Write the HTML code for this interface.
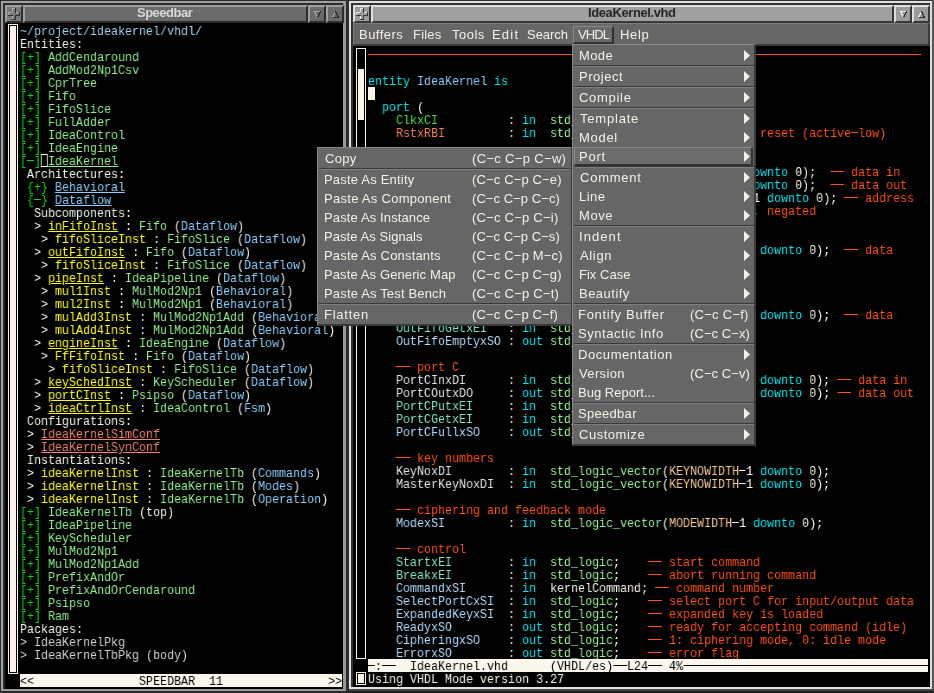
<!DOCTYPE html>
<html><head><meta charset="utf-8"><style>
*{margin:0;padding:0;box-sizing:border-box}
html,body{width:934px;height:693px;overflow:hidden;background:#3c3c3c;position:relative}
.a{position:absolute}
.ln{position:absolute;will-change:transform;transform:scaleX(0.8641975308641976);transform-origin:0 0;padding-top:1px;white-space:pre;font-family:"Liberation Mono",monospace;font-size:13.5px;letter-spacing:0px;line-height:13px;height:13px;color:#f8f4e8}
.ln b{font-weight:normal}
.ln{-webkit-text-stroke:0px currentColor}
.ln i.d{display:inline-block;height:1px;background:currentColor;vertical-align:top;margin-top:5px}
.u{text-decoration:underline;text-underline-offset:1px}
.w{color:#f8f4e8}
.dir{color:#a0d0f0}
.gb{color:#00dd00}
.ent{color:#90ee90}
.arch{color:#87cefa}
.inst{color:#ffff00}
.cfg{color:#f08070}
.pkg{color:#d3d3d3}
.cm{color:#ff5214}
.kw{color:#00e8f0}
.nm{color:#87cefa}
.ty{color:#98f098}
.clk{color:#40e040}
.rst{color:#f08050}
.dat{color:#e4e4e4}
.en{color:#7fe8c0}
.st{color:#b0dcff}
.cst{color:#f5c890}
.cbox{display:inline-block;width:8.100px;height:13px;border:1px solid #f8f4e8;vertical-align:top;margin-top:-1px}
.sans{position:absolute;will-change:transform;white-space:pre;font-family:"Liberation Sans",sans-serif;font-size:13px;line-height:15px;color:#f4f0e4;letter-spacing:0.3px}
</style></head>
<body>

<!-- left window -->
<div class="a" style="left:0;top:0;width:348px;height:693px;background:#2c2c2c"></div>
<div class="a" style="left:1px;top:1px;width:345px;height:2px;background:#a0a0a0"></div>
<div class="a" style="left:1px;top:1px;width:2px;height:690px;background:#a0a0a0"></div>
<div class="a" style="left:343px;top:3px;width:3px;height:688px;background:#999"></div>
<div class="a" style="left:3px;top:689px;width:343px;height:2px;background:#999"></div>
<!-- buttons -->
<div class="a" style="left:5px;top:5px;width:18px;height:18px;background:#7a7a7a;border-top:2px solid #a0a0a0;border-left:2px solid #a0a0a0;border-right:2px solid #2c2c2c;border-bottom:2px solid #2c2c2c"></div>
<svg class="a" style="left:8px;top:8px" width="12" height="12" shape-rendering="crispEdges"><rect x="4" y="0" width="4" height="12" fill="#7a7a7a"/><rect x="0" y="4" width="12" height="4" fill="#7a7a7a"/><rect x="4" y="0" width="4" height="1" fill="#a8a8a8"/><rect x="4" y="0" width="1" height="4" fill="#a8a8a8"/><rect x="0" y="4" width="4" height="1" fill="#a8a8a8"/><rect x="0" y="4" width="1" height="4" fill="#a8a8a8"/><rect x="8" y="4" width="4" height="1" fill="#a8a8a8"/><rect x="4" y="8" width="1" height="4" fill="#a8a8a8"/><rect x="7" y="0" width="1" height="5" fill="#2c2c2c"/><rect x="11" y="4" width="1" height="4" fill="#2c2c2c"/><rect x="8" y="7" width="4" height="1" fill="#2c2c2c"/><rect x="7" y="7" width="1" height="5" fill="#2c2c2c"/><rect x="4" y="11" width="4" height="1" fill="#2c2c2c"/><rect x="0" y="7" width="5" height="1" fill="#2c2c2c"/></svg>
<div class="a" style="left:23px;top:5px;width:285px;height:18px;background:#6b6b6b;border-top:2px solid #a0a0a0;border-left:2px solid #a0a0a0;border-right:2px solid #2c2c2c;border-bottom:2px solid #2c2c2c"></div>
<div class="a" style="left:308px;top:5px;width:18px;height:18px;background:#6b6b6b;border-top:2px solid #a0a0a0;border-left:2px solid #a0a0a0;border-right:2px solid #2c2c2c;border-bottom:2px solid #2c2c2c"></div>
<div class="a" style="left:326px;top:5px;width:18px;height:18px;background:#6b6b6b;border-top:2px solid #a0a0a0;border-left:2px solid #a0a0a0;border-right:2px solid #2c2c2c;border-bottom:2px solid #2c2c2c"></div>
<div class="sans" style="left:137px;top:5px;font-weight:bold;font-size:13px;color:#d8d8d8;letter-spacing:-0.5px">Speedbar</div>
<svg class="a" style="left:314px;top:11px" width="8" height="8" shape-rendering="crispEdges"><path d="M0.5 0.5H6.5" stroke="#a0a0a0"/><path d="M0.5 0.5L3.5 6.5" stroke="#a0a0a0"/><path d="M6.5 0.5L3.5 6.5" stroke="#2a2a2a"/></svg>
<svg class="a" style="left:332px;top:11px" width="8" height="8" shape-rendering="crispEdges"><path d="M0.5 6.5L3.5 0.5" stroke="#a0a0a0"/><path d="M3.5 0.5L6.5 6.5" stroke="#2a2a2a"/><path d="M0.5 6.5H6.5" stroke="#2a2a2a"/></svg>
<!-- content -->
<div class="a" style="left:5px;top:23px;width:338px;height:666px;background:#000"></div>

<!-- right window -->
<div class="a" style="left:348px;top:0;width:586px;height:693px;background:#333"></div>
<div class="a" style="left:349px;top:1px;width:583px;height:2px;background:#e0e0e0"></div>
<div class="a" style="left:349px;top:1px;width:2px;height:688px;background:#e0e0e0"></div>
<div class="a" style="left:930px;top:3px;width:2px;height:686px;background:#e0e0e0"></div>
<div class="a" style="left:932px;top:0;width:2px;height:693px;background:#555"></div>
<div class="a" style="left:349px;top:687px;width:583px;height:2px;background:#e0e0e0"></div>
<div class="a" style="left:349px;top:689px;width:585px;height:2px;background:#484848"></div>
<div class="a" style="left:348px;top:691px;width:586px;height:2px;background:#1e1e1e"></div>
<!-- buttons -->
<div class="a" style="left:353px;top:5px;width:18px;height:18px;background:#9c9c9c;border-top:2px solid #e0e0e0;border-left:2px solid #e0e0e0;border-right:2px solid #383838;border-bottom:2px solid #383838"></div>
<svg class="a" style="left:356px;top:8px" width="12" height="12" shape-rendering="crispEdges"><rect x="4" y="0" width="4" height="12" fill="#9c9c9c"/><rect x="0" y="4" width="12" height="4" fill="#9c9c9c"/><rect x="4" y="0" width="4" height="1" fill="#e8e8e8"/><rect x="4" y="0" width="1" height="4" fill="#e8e8e8"/><rect x="0" y="4" width="4" height="1" fill="#e8e8e8"/><rect x="0" y="4" width="1" height="4" fill="#e8e8e8"/><rect x="8" y="4" width="4" height="1" fill="#e8e8e8"/><rect x="4" y="8" width="1" height="4" fill="#e8e8e8"/><rect x="7" y="0" width="1" height="5" fill="#383838"/><rect x="11" y="4" width="1" height="4" fill="#383838"/><rect x="8" y="7" width="4" height="1" fill="#383838"/><rect x="7" y="7" width="1" height="5" fill="#383838"/><rect x="4" y="11" width="4" height="1" fill="#383838"/><rect x="0" y="7" width="5" height="1" fill="#383838"/></svg>
<div class="a" style="left:371px;top:5px;width:523px;height:18px;background:#a0a0a0;border-top:2px solid #e0e0e0;border-left:2px solid #e0e0e0;border-right:2px solid #383838;border-bottom:2px solid #383838"></div>
<div class="a" style="left:894px;top:5px;width:18px;height:18px;background:#9c9c9c;border-top:2px solid #e0e0e0;border-left:2px solid #e0e0e0;border-right:2px solid #383838;border-bottom:2px solid #383838"></div>
<div class="a" style="left:912px;top:5px;width:18px;height:18px;background:#9c9c9c;border-top:2px solid #e0e0e0;border-left:2px solid #e0e0e0;border-right:2px solid #383838;border-bottom:2px solid #383838"></div>
<div class="sans" style="left:588px;top:5px;font-weight:bold;font-size:13px;color:#262626;letter-spacing:-0.4px">IdeaKernel.vhd</div>
<svg class="a" style="left:900px;top:11px" width="8" height="8" shape-rendering="crispEdges"><path d="M0.5 0.5H6.5" stroke="#f0f0f0"/><path d="M0.5 0.5L3.5 6.5" stroke="#f0f0f0"/><path d="M6.5 0.5L3.5 6.5" stroke="#303030"/></svg>
<svg class="a" style="left:918px;top:11px" width="8" height="8" shape-rendering="crispEdges"><path d="M0.5 6.5L3.5 0.5" stroke="#f0f0f0"/><path d="M3.5 0.5L6.5 6.5" stroke="#303030"/><path d="M0.5 6.5H6.5" stroke="#303030"/></svg>
<!-- menubar -->
<div class="a" style="left:353px;top:23px;width:577px;height:23px;background:#666;border-top:1px solid #7a7a7a;border-left:1px solid #7a7a7a;border-bottom:2px solid #3a3a3a;border-right:2px solid #3a3a3a"></div>
<div class="a" style="left:353px;top:46px;width:577px;height:641px;background:#000"></div>

<div class="sans" style="left:359.4px;top:27px;letter-spacing:0.467px">Buffers</div>
<div class="sans" style="left:413.2px;top:27px;letter-spacing:0.2px">Files</div>
<div class="sans" style="left:451.9px;top:27px;letter-spacing:0.475px">Tools</div>
<div class="sans" style="left:492.4px;top:27px;letter-spacing:1.2px">Edit</div>
<div class="sans" style="left:526.6px;top:27px;letter-spacing:-0.04px">Search</div>
<div class="a" style="left:573px;top:26px;width:41px;height:18px;background:#6a6a6a;border-top:1px solid #888;border-left:1px solid #888;border-right:2px solid #333;border-bottom:2px solid #333"></div>
<div class="sans" style="left:578.3px;top:27px;letter-spacing:-0.933px">VHDL</div>
<div class="sans" style="left:619.5px;top:27px;letter-spacing:0.633px">Help</div>
<div class="ln" style="left:20px;top:24px"><b class="dir">~/project/ideakernel/vhdl/</b></div>
<div class="ln" style="left:20px;top:37px"><b class="w">Entities:</b></div>
<div class="ln" style="left:20px;top:50px"><b class="gb">[+]</b><b class="w"> </b><b class="ent">AddCendaround</b></div>
<div class="ln" style="left:20px;top:63px"><b class="gb">[+]</b><b class="w"> </b><b class="ent">AddMod2Np1Csv</b></div>
<div class="ln" style="left:20px;top:76px"><b class="gb">[+]</b><b class="w"> </b><b class="ent">CprTree</b></div>
<div class="ln" style="left:20px;top:89px"><b class="gb">[+]</b><b class="w"> </b><b class="ent">Fifo</b></div>
<div class="ln" style="left:20px;top:102px"><b class="gb">[+]</b><b class="w"> </b><b class="ent">FifoSlice</b></div>
<div class="ln" style="left:20px;top:115px"><b class="gb">[+]</b><b class="w"> </b><b class="ent">FullAdder</b></div>
<div class="ln" style="left:20px;top:128px"><b class="gb">[+]</b><b class="w"> </b><b class="ent">IdeaControl</b></div>
<div class="ln" style="left:20px;top:141px"><b class="gb">[+]</b><b class="w"> </b><b class="ent">IdeaEngine</b></div>
<div class="ln" style="left:20px;top:154px"><b class="gb">[<i class="d" style="width:8.100px"></i>]</b><i class="cbox"></i><b class="ent u">IdeaKernel</b></div>
<div class="ln" style="left:20px;top:167px"><b class="w"> Architectures:</b></div>
<div class="ln" style="left:20px;top:180px"><b class="w"> </b><b class="gb">{+}</b><b class="w"> </b><b class="arch u">Behavioral</b></div>
<div class="ln" style="left:20px;top:193px"><b class="w"> </b><b class="gb">{<i class="d" style="width:8.100px"></i>}</b><b class="w"> </b><b class="arch u">Dataflow</b></div>
<div class="ln" style="left:20px;top:206px"><b class="w">  Subcomponents:</b></div>
<div class="ln" style="left:20px;top:219px"><b class="w">  &gt; </b><b class="inst u">inFifoInst</b><b class="w"> : </b><b class="ent">Fifo</b><b class="w"> (</b><b class="arch">Dataflow</b><b class="w">)</b></div>
<div class="ln" style="left:20px;top:232px"><b class="w">   &gt; </b><b class="inst">fifoSliceInst</b><b class="w"> : </b><b class="ent">FifoSlice</b><b class="w"> (</b><b class="arch">Dataflow</b><b class="w">)</b></div>
<div class="ln" style="left:20px;top:245px"><b class="w">  &gt; </b><b class="inst u">outFifoInst</b><b class="w"> : </b><b class="ent">Fifo</b><b class="w"> (</b><b class="arch">Dataflow</b><b class="w">)</b></div>
<div class="ln" style="left:20px;top:258px"><b class="w">   &gt; </b><b class="inst">fifoSliceInst</b><b class="w"> : </b><b class="ent">FifoSlice</b><b class="w"> (</b><b class="arch">Dataflow</b><b class="w">)</b></div>
<div class="ln" style="left:20px;top:271px"><b class="w">  &gt; </b><b class="inst u">pipeInst</b><b class="w"> : </b><b class="ent">IdeaPipeline</b><b class="w"> (</b><b class="arch">Dataflow</b><b class="w">)</b></div>
<div class="ln" style="left:20px;top:284px"><b class="w">   &gt; </b><b class="inst">mul1Inst</b><b class="w"> : </b><b class="ent">MulMod2Np1</b><b class="w"> (</b><b class="arch">Behavioral</b><b class="w">)</b></div>
<div class="ln" style="left:20px;top:297px"><b class="w">   &gt; </b><b class="inst">mul2Inst</b><b class="w"> : </b><b class="ent">MulMod2Np1</b><b class="w"> (</b><b class="arch">Behavioral</b><b class="w">)</b></div>
<div class="ln" style="left:20px;top:310px"><b class="w">   &gt; </b><b class="inst">mulAdd3Inst</b><b class="w"> : </b><b class="ent">MulMod2Np1Add</b><b class="w"> (</b><b class="arch">Behavioral</b><b class="w">)</b></div>
<div class="ln" style="left:20px;top:323px"><b class="w">   &gt; </b><b class="inst">mulAdd4Inst</b><b class="w"> : </b><b class="ent">MulMod2Np1Add</b><b class="w"> (</b><b class="arch">Behavioral</b><b class="w">)</b></div>
<div class="ln" style="left:20px;top:336px"><b class="w">  &gt; </b><b class="inst u">engineInst</b><b class="w"> : </b><b class="ent">IdeaEngine</b><b class="w"> (</b><b class="arch">Dataflow</b><b class="w">)</b></div>
<div class="ln" style="left:20px;top:349px"><b class="w">   &gt; </b><b class="inst">FfFifoInst</b><b class="w"> : </b><b class="ent">Fifo</b><b class="w"> (</b><b class="arch">Dataflow</b><b class="w">)</b></div>
<div class="ln" style="left:20px;top:362px"><b class="w">    &gt; </b><b class="inst">fifoSliceInst</b><b class="w"> : </b><b class="ent">FifoSlice</b><b class="w"> (</b><b class="arch">Dataflow</b><b class="w">)</b></div>
<div class="ln" style="left:20px;top:375px"><b class="w">  &gt; </b><b class="inst u">keySchedInst</b><b class="w"> : </b><b class="ent">KeyScheduler</b><b class="w"> (</b><b class="arch">Dataflow</b><b class="w">)</b></div>
<div class="ln" style="left:20px;top:388px"><b class="w">  &gt; </b><b class="inst u">portCInst</b><b class="w"> : </b><b class="ent">Psipso</b><b class="w"> (</b><b class="arch">Dataflow</b><b class="w">)</b></div>
<div class="ln" style="left:20px;top:401px"><b class="w">  &gt; </b><b class="inst u">ideaCtrlInst</b><b class="w"> : </b><b class="ent">IdeaControl</b><b class="w"> (</b><b class="arch">Fsm</b><b class="w">)</b></div>
<div class="ln" style="left:20px;top:414px"><b class="w"> Configurations:</b></div>
<div class="ln" style="left:20px;top:427px"><b class="w"> &gt; </b><b class="cfg u">IdeaKernelSimConf</b></div>
<div class="ln" style="left:20px;top:440px"><b class="w"> &gt; </b><b class="cfg u">IdeaKernelSynConf</b></div>
<div class="ln" style="left:20px;top:453px"><b class="w"> Instantiations:</b></div>
<div class="ln" style="left:20px;top:466px"><b class="w"> &gt; </b><b class="inst">ideaKernelInst</b><b class="w"> : </b><b class="ent">IdeaKernelTb</b><b class="w"> (</b><b class="arch">Commands</b><b class="w">)</b></div>
<div class="ln" style="left:20px;top:479px"><b class="w"> &gt; </b><b class="inst">ideaKernelInst</b><b class="w"> : </b><b class="ent">IdeaKernelTb</b><b class="w"> (</b><b class="arch">Modes</b><b class="w">)</b></div>
<div class="ln" style="left:20px;top:492px"><b class="w"> &gt; </b><b class="inst">ideaKernelInst</b><b class="w"> : </b><b class="ent">IdeaKernelTb</b><b class="w"> (</b><b class="arch">Operation</b><b class="w">)</b></div>
<div class="ln" style="left:20px;top:505px"><b class="gb">[+]</b><b class="w"> </b><b class="ent">IdeaKernelTb</b><b class="w"> (top)</b></div>
<div class="ln" style="left:20px;top:518px"><b class="gb">[+]</b><b class="w"> </b><b class="ent">IdeaPipeline</b></div>
<div class="ln" style="left:20px;top:531px"><b class="gb">[+]</b><b class="w"> </b><b class="ent">KeyScheduler</b></div>
<div class="ln" style="left:20px;top:544px"><b class="gb">[+]</b><b class="w"> </b><b class="ent">MulMod2Np1</b></div>
<div class="ln" style="left:20px;top:557px"><b class="gb">[+]</b><b class="w"> </b><b class="ent">MulMod2Np1Add</b></div>
<div class="ln" style="left:20px;top:570px"><b class="gb">[+]</b><b class="w"> </b><b class="ent">PrefixAndOr</b></div>
<div class="ln" style="left:20px;top:583px"><b class="gb">[+]</b><b class="w"> </b><b class="ent">PrefixAndOrCendaround</b></div>
<div class="ln" style="left:20px;top:596px"><b class="gb">[+]</b><b class="w"> </b><b class="ent">Psipso</b></div>
<div class="ln" style="left:20px;top:609px"><b class="gb">[+]</b><b class="w"> </b><b class="ent">Ram</b></div>
<div class="ln" style="left:20px;top:622px"><b class="w">Packages:</b></div>
<div class="ln" style="left:20px;top:635px"><b class="pkg">&gt; </b><b class="pkg">IdeaKernelPkg</b></div>
<div class="ln" style="left:20px;top:648px"><b class="pkg">&gt; </b><b class="pkg">IdeaKernelTbPkg (body)</b></div>
<div class="ln" style="left:368px;top:48px"><b class="cm"><i class="d" style="width:639.900px"></i></b></div>
<div class="ln" style="left:368px;top:74px"><b class="kw">entity</b><b class="w"> </b><b class="nm">IdeaKernel</b><b class="w"> </b><b class="kw">is</b></div>
<div class="ln" style="left:368px;top:100px"><b class="w">  </b><b class="kw">port</b><b class="w"> (</b></div>
<div class="ln" style="left:368px;top:113px"><b class="w">    </b><b class="clk">ClkxCI</b><b class="w">          </b><b class="w">: </b><b class="kw">in</b><b class="w">  </b><b class="ty">std_logic</b><b class="w">;</b><b class="w">    </b><b class="cm"><i class="d" style="width:16.200px"></i> clock</b></div>
<div class="ln" style="left:368px;top:126px"><b class="w">    </b><b class="rst">RstxRBI</b><b class="w">         </b><b class="w">: </b><b class="kw">in</b><b class="w">  </b><b class="ty">std_logic</b><b class="w">;</b><b class="w">    </b><b class="cm"><i class="d" style="width:16.200px"></i> asynchronous reset (active<i class="d" style="width:8.100px"></i>low)</b></div>
<div class="ln" style="left:368px;top:152px"><b class="w">    </b><b class="cm"><i class="d" style="width:16.200px"></i> port A</b></div>
<div class="ln" style="left:368px;top:165px"><b class="w">    </b><b class="dat">PortAInxDI</b><b class="w">      </b><b class="w">: </b><b class="kw">in</b><b class="w">  </b><b class="ty">std_logic_vector</b><b class="w">(</b><b class="cst">BLKWIDTH</b><b class="w"><i class="d" style="width:8.100px"></i>1</b><b class="w"> </b><b class="kw">downto</b><b class="w"> </b><b class="w">0);</b><b class="w">  </b><b class="cm"><i class="d" style="width:16.200px"></i> data in</b></div>
<div class="ln" style="left:368px;top:178px"><b class="w">    </b><b class="dat">PortAOutxDO</b><b class="w">     </b><b class="w">: </b><b class="kw">out</b><b class="w"> </b><b class="ty">std_logic_vector</b><b class="w">(</b><b class="cst">BLKWIDTH</b><b class="w"><i class="d" style="width:8.100px"></i>1</b><b class="w"> </b><b class="kw">downto</b><b class="w"> </b><b class="w">0);</b><b class="w">  </b><b class="cm"><i class="d" style="width:16.200px"></i> data out</b></div>
<div class="ln" style="left:368px;top:191px"><b class="w">    </b><b class="dat">PortAAddrxDI</b><b class="w">    </b><b class="w">: </b><b class="kw">in</b><b class="w">  </b><b class="ty">std_logic_vector</b><b class="w">(</b><b class="cst">ADDRESSWIDT</b><b class="w"><i class="d" style="width:8.100px"></i>1</b><b class="w"> </b><b class="kw">downto</b><b class="w"> </b><b class="w">0);</b><b class="w"> </b><b class="cm"><i class="d" style="width:16.200px"></i> address</b></div>
<div class="ln" style="left:368px;top:204px"><b class="w">    </b><b class="en">PortAWritexEBI</b><b class="w">  </b><b class="w">: </b><b class="kw">in</b><b class="w">  </b><b class="ty">std_logic</b><b class="w">;</b><b class="w">    </b><b class="cm"><i class="d" style="width:16.200px"></i> write enable, negated</b></div>
<div class="ln" style="left:368px;top:230px"><b class="w">    </b><b class="cm"><i class="d" style="width:16.200px"></i> port B</b></div>
<div class="ln" style="left:368px;top:243px"><b class="w">    </b><b class="dat">InFifoInxDI</b><b class="w">     </b><b class="w">: </b><b class="kw">in</b><b class="w">  </b><b class="ty">std_logic_vector</b><b class="w">(</b><b class="cst">DATAWIDTHB</b><b class="w"><i class="d" style="width:8.100px"></i>1</b><b class="w"> </b><b class="kw">downto</b><b class="w"> </b><b class="w">0);</b><b class="w">  </b><b class="cm"><i class="d" style="width:16.200px"></i> data</b></div>
<div class="ln" style="left:368px;top:256px"><b class="w">    </b><b class="en">InFifoPutxEI</b><b class="w">    </b><b class="w">: </b><b class="kw">in</b><b class="w">  </b><b class="ty">std_logic</b><b class="w">;</b></div>
<div class="ln" style="left:368px;top:269px"><b class="w">    </b><b class="st">InFifoFullxSO</b><b class="w">   </b><b class="w">: </b><b class="kw">out</b><b class="w"> </b><b class="ty">std_logic</b><b class="w">;</b></div>
<div class="ln" style="left:368px;top:295px"><b class="w">    </b><b class="cm"><i class="d" style="width:16.200px"></i> port B out</b></div>
<div class="ln" style="left:368px;top:308px"><b class="w">    </b><b class="dat">OutFifoOutxDO</b><b class="w">   </b><b class="w">: </b><b class="kw">out</b><b class="w"> </b><b class="ty">std_logic_vector</b><b class="w">(</b><b class="cst">DATAWIDTHB</b><b class="w"><i class="d" style="width:8.100px"></i>1</b><b class="w"> </b><b class="kw">downto</b><b class="w"> </b><b class="w">0);</b><b class="w">  </b><b class="cm"><i class="d" style="width:16.200px"></i> data</b></div>
<div class="ln" style="left:368px;top:321px"><b class="w">    </b><b class="en">OutFifoGetxEI</b><b class="w">   </b><b class="w">: </b><b class="kw">in</b><b class="w">  </b><b class="ty">std_logic</b><b class="w">;</b></div>
<div class="ln" style="left:368px;top:334px"><b class="w">    </b><b class="st">OutFifoEmptyxSO</b><b class="w"> </b><b class="w">: </b><b class="kw">out</b><b class="w"> </b><b class="ty">std_logic</b><b class="w">;</b></div>
<div class="ln" style="left:368px;top:360px"><b class="w">    </b><b class="cm"><i class="d" style="width:16.200px"></i> port C</b></div>
<div class="ln" style="left:368px;top:373px"><b class="w">    </b><b class="dat">PortCInxDI</b><b class="w">      </b><b class="w">: </b><b class="kw">in</b><b class="w">  </b><b class="ty">std_logic_vector</b><b class="w">(</b><b class="cst">DATAWIDTHB</b><b class="w"><i class="d" style="width:8.100px"></i>1</b><b class="w"> </b><b class="kw">downto</b><b class="w"> </b><b class="w">0);</b><b class="w"> </b><b class="cm"><i class="d" style="width:16.200px"></i> data in</b></div>
<div class="ln" style="left:368px;top:386px"><b class="w">    </b><b class="dat">PortCOutxDO</b><b class="w">     </b><b class="w">: </b><b class="kw">out</b><b class="w"> </b><b class="ty">std_logic_vector</b><b class="w">(</b><b class="cst">DATAWIDTHB</b><b class="w"><i class="d" style="width:8.100px"></i>1</b><b class="w"> </b><b class="kw">downto</b><b class="w"> </b><b class="w">0);</b><b class="w"> </b><b class="cm"><i class="d" style="width:16.200px"></i> data out</b></div>
<div class="ln" style="left:368px;top:399px"><b class="w">    </b><b class="en">PortCPutxEI</b><b class="w">     </b><b class="w">: </b><b class="kw">in</b><b class="w">  </b><b class="ty">std_logic</b><b class="w">;</b></div>
<div class="ln" style="left:368px;top:412px"><b class="w">    </b><b class="en">PortCGetxEI</b><b class="w">     </b><b class="w">: </b><b class="kw">in</b><b class="w">  </b><b class="ty">std_logic</b><b class="w">;</b></div>
<div class="ln" style="left:368px;top:425px"><b class="w">    </b><b class="st">PortCFullxSO</b><b class="w">    </b><b class="w">: </b><b class="kw">out</b><b class="w"> </b><b class="ty">std_logic</b><b class="w">;</b></div>
<div class="ln" style="left:368px;top:451px"><b class="w">    </b><b class="cm"><i class="d" style="width:16.200px"></i> key numbers</b></div>
<div class="ln" style="left:368px;top:464px"><b class="w">    </b><b class="dat">KeyNoxDI</b><b class="w">        </b><b class="w">: </b><b class="kw">in</b><b class="w">  </b><b class="ty">std_logic_vector</b><b class="w">(</b><b class="cst">KEYNOWIDTH</b><b class="w"><i class="d" style="width:8.100px"></i>1</b><b class="w"> </b><b class="kw">downto</b><b class="w"> </b><b class="w">0);</b></div>
<div class="ln" style="left:368px;top:477px"><b class="w">    </b><b class="dat">MasterKeyNoxDI</b><b class="w">  </b><b class="w">: </b><b class="kw">in</b><b class="w">  </b><b class="ty">std_logic_vector</b><b class="w">(</b><b class="cst">KEYNOWIDTH</b><b class="w"><i class="d" style="width:8.100px"></i>1</b><b class="w"> </b><b class="kw">downto</b><b class="w"> </b><b class="w">0);</b></div>
<div class="ln" style="left:368px;top:503px"><b class="w">    </b><b class="cm"><i class="d" style="width:16.200px"></i> ciphering and feedback mode</b></div>
<div class="ln" style="left:368px;top:516px"><b class="w">    </b><b class="st">ModexSI</b><b class="w">         </b><b class="w">: </b><b class="kw">in</b><b class="w">  </b><b class="ty">std_logic_vector</b><b class="w">(</b><b class="cst">MODEWIDTH</b><b class="w"><i class="d" style="width:8.100px"></i>1</b><b class="w"> </b><b class="kw">downto</b><b class="w"> </b><b class="w">0);</b></div>
<div class="ln" style="left:368px;top:542px"><b class="w">    </b><b class="cm"><i class="d" style="width:16.200px"></i> control</b></div>
<div class="ln" style="left:368px;top:555px"><b class="w">    </b><b class="en">StartxEI</b><b class="w">        </b><b class="w">: </b><b class="kw">in</b><b class="w">  </b><b class="ty">std_logic</b><b class="w">;</b><b class="w">    </b><b class="cm"><i class="d" style="width:16.200px"></i> start command</b></div>
<div class="ln" style="left:368px;top:568px"><b class="w">    </b><b class="en">BreakxEI</b><b class="w">        </b><b class="w">: </b><b class="kw">in</b><b class="w">  </b><b class="ty">std_logic</b><b class="w">;</b><b class="w">    </b><b class="cm"><i class="d" style="width:16.200px"></i> abort running command</b></div>
<div class="ln" style="left:368px;top:581px"><b class="w">    </b><b class="st">CommandxSI</b><b class="w">      </b><b class="w">: </b><b class="kw">in</b><b class="w">  </b><b class="w">kernelCommand;</b><b class="w"> </b><b class="cm"><i class="d" style="width:16.200px"></i> command number</b></div>
<div class="ln" style="left:368px;top:594px"><b class="w">    </b><b class="st">SelectPortCxSI</b><b class="w">  </b><b class="w">: </b><b class="kw">in</b><b class="w">  </b><b class="ty">std_logic</b><b class="w">;</b><b class="w">    </b><b class="cm"><i class="d" style="width:16.200px"></i> select port C for input/output data</b></div>
<div class="ln" style="left:368px;top:607px"><b class="w">    </b><b class="st">ExpandedKeyxSI</b><b class="w">  </b><b class="w">: </b><b class="kw">in</b><b class="w">  </b><b class="ty">std_logic</b><b class="w">;</b><b class="w">    </b><b class="cm"><i class="d" style="width:16.200px"></i> expanded key is loaded</b></div>
<div class="ln" style="left:368px;top:620px"><b class="w">    </b><b class="st">ReadyxSO</b><b class="w">        </b><b class="w">: </b><b class="kw">out</b><b class="w"> </b><b class="ty">std_logic</b><b class="w">;</b><b class="w">    </b><b class="cm"><i class="d" style="width:16.200px"></i> ready for accepting command (idle)</b></div>
<div class="ln" style="left:368px;top:633px"><b class="w">    </b><b class="st">CipheringxSO</b><b class="w">    </b><b class="w">: </b><b class="kw">out</b><b class="w"> </b><b class="ty">std_logic</b><b class="w">;</b><b class="w">    </b><b class="cm"><i class="d" style="width:16.200px"></i> 1: ciphering mode, 0: idle mode</b></div>
<div class="ln" style="left:368px;top:646px"><b class="w">    </b><b class="st">ErrorxSO</b><b class="w">        </b><b class="w">: </b><b class="kw">out</b><b class="w"> </b><b class="ty">std_logic</b><b class="w">;</b><b class="w">    </b><b class="cm"><i class="d" style="width:16.200px"></i> error flag</b></div>


<!-- left scrollbar -->
<div class="a" style="left:8px;top:24px;width:10px;height:650px;border:1px solid #f8f4e8"></div>
<div class="a" style="left:10px;top:26px;width:6px;height:646px;background:#f8f4e8"></div>
<!-- left modeline -->
<div class="a" style="left:20px;top:674px;width:322px;height:13px;background:#fbf7ec"></div>
<div class="ln" style="left:20px;top:674px;color:#000">&lt;&lt;               SPEEDBAR  11               &gt;&gt;</div>
<!-- right scrollbar -->
<div class="a" style="left:356px;top:48px;width:10px;height:611px;border:1px solid #f8f4e8"></div>
<div class="a" style="left:358px;top:69px;width:6px;height:51px;background:#f8f4e8"></div>
<!-- cursor -->
<div class="a" style="left:368px;top:87px;width:7px;height:13px;background:#f8f4e8"></div>
<!-- right modeline -->
<div class="a" style="left:368px;top:659px;width:560px;height:13px;background:#fbf7ec"></div>
<!-- echo cursor -->
<div class="a" style="left:356px;top:672px;width:10px;height:13px;border:1px solid #f8f4e8"></div>
<div class="a" style="left:358px;top:674px;width:6px;height:9px;background:#f8f4e8"></div>
<div class="ln" style="left:368px;top:672px">Using VHDL Mode version 3.27</div>

<div class="ln" style="left:368px;top:659px;color:#000"><b class="ml"><i class="d" style="width:8.100px"></i>:<i class="d" style="width:16.200px"></i>  IdeaKernel.vhd      (VHDL/es)<i class="d" style="width:16.200px"></i>L24<i class="d" style="width:16.200px"></i> 4%<i class="d" style="width:283.500px"></i></b></div>

<div class="a" style="left:317px;top:147px;width:256px;height:179px;background:#666;border-top:1px solid #888;border-left:1px solid #888;border-right:2px solid #3a3a3a;border-bottom:2px solid #3a3a3a"></div>
<div class="sans" style="left:325.0px;top:151px;letter-spacing:0.267px">Copy</div>
<div class="sans" style="left:472.3px;top:151px;letter-spacing:0.333px">(C&#8722;c C&#8722;p C&#8722;w)</div>
<div class="a" style="left:319px;top:168px;width:252px;height:1px;background:#3a3a3a"></div>
<div class="a" style="left:319px;top:169px;width:252px;height:1px;background:#7e7e7e"></div>
<div class="sans" style="left:324.4px;top:172px;letter-spacing:0.2px">Paste As Entity</div>
<div class="sans" style="left:472.3px;top:172px;letter-spacing:0.142px">(C&#8722;c C&#8722;p C&#8722;e)</div>
<div class="sans" style="left:324.4px;top:191px;letter-spacing:0.282px">Paste As Component</div>
<div class="sans" style="left:472.3px;top:191px;letter-spacing:0.067px">(C&#8722;c C&#8722;p C&#8722;c)</div>
<div class="sans" style="left:324.4px;top:210px;letter-spacing:0.125px">Paste As Instance</div>
<div class="sans" style="left:472.3px;top:210px;letter-spacing:0.233px">(C&#8722;c C&#8722;p C&#8722;i)</div>
<div class="sans" style="left:324.4px;top:229px;letter-spacing:0.06px">Paste As Signals</div>
<div class="sans" style="left:472.3px;top:229px;letter-spacing:0.058px">(C&#8722;c C&#8722;p C&#8722;s)</div>
<div class="sans" style="left:324.4px;top:248px;letter-spacing:0.182px">Paste As Constants</div>
<div class="sans" style="left:472.3px;top:248px;letter-spacing:0.175px">(C&#8722;c C&#8722;p M&#8722;c)</div>
<div class="sans" style="left:324.4px;top:267px;letter-spacing:0.111px">Paste As Generic Map</div>
<div class="sans" style="left:472.3px;top:267px;letter-spacing:0.142px">(C&#8722;c C&#8722;p C&#8722;g)</div>
<div class="sans" style="left:324.4px;top:286px;letter-spacing:0.167px">Paste As Test Bench</div>
<div class="sans" style="left:472.3px;top:286px;letter-spacing:0.225px">(C&#8722;c C&#8722;p C&#8722;t)</div>
<div class="a" style="left:319px;top:303px;width:252px;height:1px;background:#3a3a3a"></div>
<div class="a" style="left:319px;top:304px;width:252px;height:1px;background:#7e7e7e"></div>
<div class="sans" style="left:324.4px;top:307px;letter-spacing:0.75px">Flatten</div>
<div class="sans" style="left:472.3px;top:307px;letter-spacing:0.142px">(C&#8722;c C&#8722;p C&#8722;f)</div>
<div class="a" style="left:572px;top:44px;width:184px;height:402px;background:#666;border-top:1px solid #888;border-left:1px solid #888;border-right:2px solid #3a3a3a;border-bottom:2px solid #3a3a3a"></div>
<div class="sans" style="left:579.0px;top:48px;letter-spacing:0.4px">Mode</div>
<svg class="a" style="left:744px;top:50px" width="6" height="11"><polygon points="0,0 6,5.5 0,11" fill="#f4f0e4"/></svg>
<div class="a" style="left:574px;top:65px;width:180px;height:1px;background:#3a3a3a"></div>
<div class="a" style="left:574px;top:66px;width:180px;height:1px;background:#7e7e7e"></div>
<div class="sans" style="left:579.0px;top:69px;letter-spacing:0.517px">Project</div>
<svg class="a" style="left:744px;top:71px" width="6" height="11"><polygon points="0,0 6,5.5 0,11" fill="#f4f0e4"/></svg>
<div class="a" style="left:574px;top:86px;width:180px;height:1px;background:#3a3a3a"></div>
<div class="a" style="left:574px;top:87px;width:180px;height:1px;background:#7e7e7e"></div>
<div class="sans" style="left:579.0px;top:90px;letter-spacing:0.7px">Compile</div>
<svg class="a" style="left:744px;top:92px" width="6" height="11"><polygon points="0,0 6,5.5 0,11" fill="#f4f0e4"/></svg>
<div class="a" style="left:574px;top:107px;width:180px;height:1px;background:#3a3a3a"></div>
<div class="a" style="left:574px;top:108px;width:180px;height:1px;background:#7e7e7e"></div>
<div class="sans" style="left:580.0px;top:111px;letter-spacing:0.8px">Template</div>
<svg class="a" style="left:744px;top:113px" width="6" height="11"><polygon points="0,0 6,5.5 0,11" fill="#f4f0e4"/></svg>
<div class="sans" style="left:579.0px;top:130px;letter-spacing:0.7px">Model</div>
<svg class="a" style="left:744px;top:132px" width="6" height="11"><polygon points="0,0 6,5.5 0,11" fill="#f4f0e4"/></svg>
<div class="a" style="left:574px;top:147px;width:179px;height:19px;background:#6c6c6c;border-top:1px solid #8a8a8a;border-left:1px solid #8a8a8a;border-right:2px solid #333;border-bottom:2px solid #333"></div>
<div class="sans" style="left:579.0px;top:149px;letter-spacing:0.767px">Port</div>
<svg class="a" style="left:744px;top:151px" width="6" height="11"><polygon points="0,0 6,5.5 0,11" fill="#f4f0e4"/></svg>
<div class="a" style="left:574px;top:166px;width:180px;height:1px;background:#3a3a3a"></div>
<div class="a" style="left:574px;top:167px;width:180px;height:1px;background:#7e7e7e"></div>
<div class="sans" style="left:579.7px;top:170px;letter-spacing:0.767px">Comment</div>
<svg class="a" style="left:744px;top:172px" width="6" height="11"><polygon points="0,0 6,5.5 0,11" fill="#f4f0e4"/></svg>
<div class="sans" style="left:579.0px;top:189px;letter-spacing:0.5px">Line</div>
<svg class="a" style="left:744px;top:191px" width="6" height="11"><polygon points="0,0 6,5.5 0,11" fill="#f4f0e4"/></svg>
<div class="sans" style="left:579.0px;top:208px;letter-spacing:0.567px">Move</div>
<svg class="a" style="left:744px;top:210px" width="6" height="11"><polygon points="0,0 6,5.5 0,11" fill="#f4f0e4"/></svg>
<div class="a" style="left:574px;top:225px;width:180px;height:1px;background:#3a3a3a"></div>
<div class="a" style="left:574px;top:226px;width:180px;height:1px;background:#7e7e7e"></div>
<div class="sans" style="left:579.0px;top:229px;letter-spacing:1.08px">Indent</div>
<svg class="a" style="left:744px;top:231px" width="6" height="11"><polygon points="0,0 6,5.5 0,11" fill="#f4f0e4"/></svg>
<div class="sans" style="left:580.0px;top:248px;letter-spacing:0.65px">Align</div>
<svg class="a" style="left:744px;top:250px" width="6" height="11"><polygon points="0,0 6,5.5 0,11" fill="#f4f0e4"/></svg>
<div class="sans" style="left:579.0px;top:267px;letter-spacing:0.014px">Fix Case</div>
<svg class="a" style="left:744px;top:269px" width="6" height="11"><polygon points="0,0 6,5.5 0,11" fill="#f4f0e4"/></svg>
<div class="sans" style="left:579.0px;top:286px;letter-spacing:0.486px">Beautify</div>
<svg class="a" style="left:744px;top:288px" width="6" height="11"><polygon points="0,0 6,5.5 0,11" fill="#f4f0e4"/></svg>
<div class="a" style="left:574px;top:303px;width:180px;height:1px;background:#3a3a3a"></div>
<div class="a" style="left:574px;top:304px;width:180px;height:1px;background:#7e7e7e"></div>
<div class="sans" style="left:578.3px;top:307px;letter-spacing:0.685px">Fontify Buffer</div>
<div class="sans" style="left:689.9px;top:307px;letter-spacing:0.263px">(C&#8722;c C&#8722;f)</div>
<div class="sans" style="left:578.3px;top:326px;letter-spacing:0.554px">Syntactic Info</div>
<div class="sans" style="left:689.9px;top:326px;letter-spacing:0.088px">(C&#8722;c C&#8722;x)</div>
<div class="a" style="left:574px;top:343px;width:180px;height:1px;background:#3a3a3a"></div>
<div class="a" style="left:574px;top:344px;width:180px;height:1px;background:#7e7e7e"></div>
<div class="sans" style="left:578.3px;top:347px;letter-spacing:0.575px">Documentation</div>
<svg class="a" style="left:744px;top:349px" width="6" height="11"><polygon points="0,0 6,5.5 0,11" fill="#f4f0e4"/></svg>
<div class="sans" style="left:579.3px;top:366px;letter-spacing:0.35px">Version</div>
<div class="sans" style="left:689.9px;top:366px;letter-spacing:0.088px">(C&#8722;c C&#8722;v)</div>
<div class="sans" style="left:578.3px;top:385px;letter-spacing:0.017px">Bug Report...</div>
<div class="a" style="left:574px;top:402px;width:180px;height:1px;background:#3a3a3a"></div>
<div class="a" style="left:574px;top:403px;width:180px;height:1px;background:#7e7e7e"></div>
<div class="sans" style="left:578.3px;top:406px;letter-spacing:0.3px">Speedbar</div>
<svg class="a" style="left:744px;top:408px" width="6" height="11"><polygon points="0,0 6,5.5 0,11" fill="#f4f0e4"/></svg>
<div class="a" style="left:574px;top:423px;width:180px;height:1px;background:#3a3a3a"></div>
<div class="a" style="left:574px;top:424px;width:180px;height:1px;background:#7e7e7e"></div>
<div class="sans" style="left:579.3px;top:427px;letter-spacing:0.525px">Customize</div>
<svg class="a" style="left:744px;top:429px" width="6" height="11"><polygon points="0,0 6,5.5 0,11" fill="#f4f0e4"/></svg>
</body></html>
